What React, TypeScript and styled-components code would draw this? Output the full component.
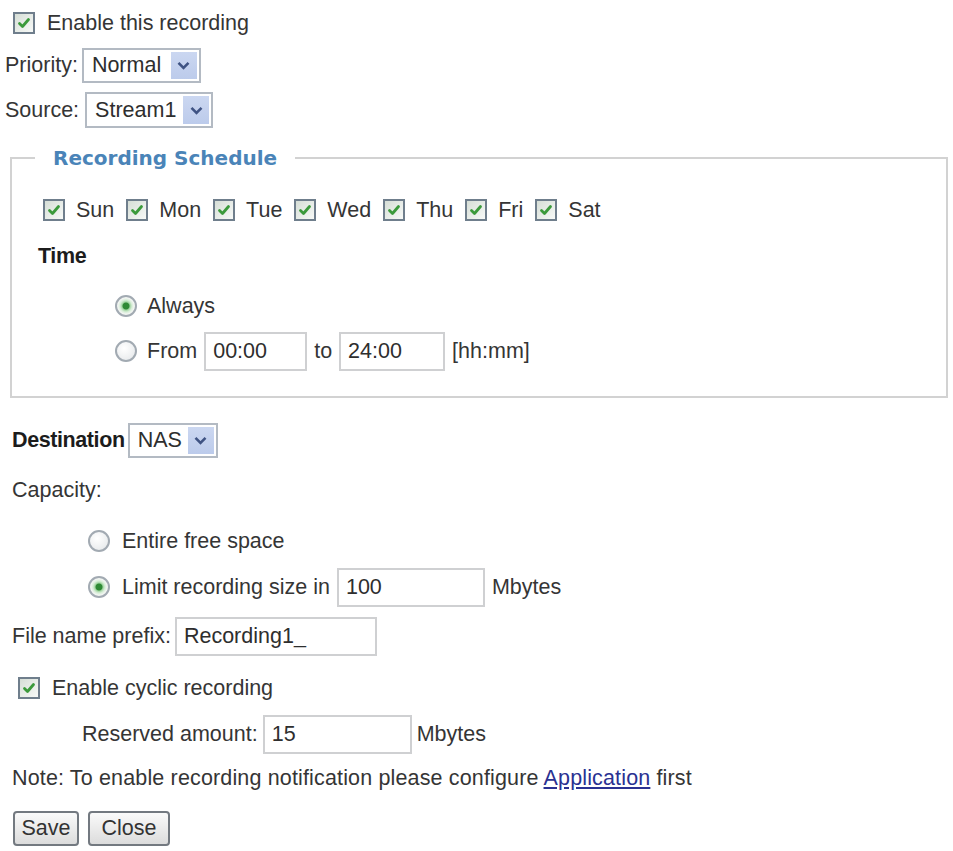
import styled, { createGlobalStyle } from "styled-components";

const GlobalStyle = createGlobalStyle`
  html, body {
    margin: 0;
    padding: 0;
    background: #fff;
  }
  body {
    font-family: "Liberation Sans", Arial, sans-serif;
    font-size: 21.5px;
    color: #353535;
  }
`;

const Page = styled.form`
  width: 953px;
  display: flex;
  flex-direction: column;
`;

const Row = styled.div<{ $h: number; $indent?: number; $gap?: number; $mt?: number }>`
  display: flex;
  align-items: center;
  height: ${(p) => p.$h}px;
  padding-left: ${(p) => p.$indent ?? 12}px;
  margin-top: ${(p) => p.$mt ?? 0}px;
  gap: ${(p) => p.$gap ?? 6}px;
  white-space: nowrap;
`;

const Strong = styled.span`
  font-weight: bold;
  color: #1c1c1c;
  letter-spacing: -0.4px;
`;

/* checkbox */
const Box = styled.span`
  box-sizing: border-box;
  width: 22px;
  height: 22px;
  flex-shrink: 0;
  display: inline-flex;
  align-items: center;
  justify-content: center;
  border: 2px solid #6f7e8c;
  background: linear-gradient(135deg, #d6ded6, #f7f9f7);
`;

const Check = () => (
  <Box>
    <svg width="16" height="16" viewBox="0 0 16 16">
      <path d="M3.5 8.5 L6.5 11.5 L12.5 4.5" fill="none" stroke="#3b9a3b" strokeWidth="2.8" strokeLinecap="round" strokeLinejoin="round" />
    </svg>
  </Box>
);

const Option = styled.label<{ $gap?: number }>`
  display: inline-flex;
  align-items: center;
  gap: ${(p) => p.$gap ?? 12}px;
`;

/* radio button */
const Radio = styled.span<{ $on?: boolean }>`
  box-sizing: border-box;
  width: 22px;
  height: 22px;
  flex-shrink: 0;
  border-radius: 50%;
  border: 2px solid #a2aab2;
  background: ${(p) =>
    p.$on
      ? "radial-gradient(circle, #2f8a35 0 3px, #9fd49f 4px, #d8eed8 6px, #f2f5f2 8px)"
      : "radial-gradient(circle at 40% 35%, #ffffff, #e3e6e8)"};
`;

/* drop-down list */
const Select = styled.div<{ $w: number; $h: number }>`
  box-sizing: border-box;
  width: ${(p) => p.$w}px;
  height: ${(p) => p.$h}px;
  display: flex;
  align-items: stretch;
  border: 2px solid #b3bac3;
  background: #fff;
  padding: 2px;
`;

const SelectValue = styled.span`
  flex: 1;
  display: flex;
  align-items: center;
  padding-left: 6px;
  color: #2e2e2e;
`;

const SelectArrow = styled.span`
  width: 26px;
  display: flex;
  align-items: center;
  justify-content: center;
  background: linear-gradient(#cbd7f1, #bccbeb);
`;

const Dropdown = ({ value, w, h }: { value: string; w: number; h: number }) => (
  <Select $w={w} $h={h}>
    <SelectValue>{value}</SelectValue>
    <SelectArrow>
      <svg width="13" height="9" viewBox="0 0 13 9">
        <path d="M1.5 1.8 L6.5 6.8 L11.5 1.8" fill="none" stroke="#3f5383" strokeWidth="2.6" />
      </svg>
    </SelectArrow>
  </Select>
);

const Field = styled.input<{ $w: number }>`
  box-sizing: border-box;
  width: ${(p) => p.$w}px;
  height: 39px;
  border: 2px solid #cfd0d2;
  padding: 0 0 0 7px;
  font: inherit;
  color: #2e2e2e;
  background: #fff;
  outline: none;
`;

/* schedule group */
const Schedule = styled.fieldset`
  box-sizing: border-box;
  width: 938px;
  margin: 12px 0 0 10px;
  padding: 0;
  min-width: 0;
  border: 2px solid #d2d2d2;
`;

const Legend = styled.legend`
  margin-left: 23px;
  padding: 0 18px;
  font-family: "DejaVu Sans", Verdana, sans-serif;
  font-weight: bold;
  font-size: 20px;
  line-height: 22px;
  color: #4a84b8;
`;

const ScheduleBody = styled.div`
  display: flex;
  flex-direction: column;
  padding: 21px 0 24px;
`;

const Note = styled.span`
  letter-spacing: 0.15px;
`;

const Link = styled.a`
  color: #2a3192;
  text-decoration: underline;
`;

const Button = styled.button<{ $w: number }>`
  box-sizing: border-box;
  width: ${(p) => p.$w}px;
  height: 35px;
  padding: 0;
  font: inherit;
  color: #333;
  border: 2px solid #737980;
  border-radius: 4px;
  background: linear-gradient(#fafafa, #dcdcdc);
`;

const days = ["Sun", "Mon", "Tue", "Wed", "Thu", "Fri", "Sat"];

export default function App() {
  return (
    <>
      <GlobalStyle />
      <Page onSubmit={(e) => e.preventDefault()}>
        <Row $h={46} $indent={13}>
          <Option>
            <Check />
            Enable this recording
          </Option>
        </Row>
        <Row $h={39} $indent={5} $gap={4}>
          <span>Priority:</span>
          <Dropdown value="Normal" w={119} h={35} />
        </Row>
        <Row $h={50} $indent={5} $gap={6}>
          <span>Source:</span>
          <Dropdown value="Stream1" w={128} h={36} />
        </Row>

        <Schedule>
          <Legend>Recording Schedule</Legend>
          <ScheduleBody>
            <Row $h={40} $indent={31} $gap={12}>
              {days.map((d) => (
                <Option key={d} $gap={11}>
                  <Check />
                  {d}
                </Option>
              ))}
            </Row>
            <Row $h={52} $indent={26}>
              <Strong>Time</Strong>
            </Row>
            <Row $h={48} $indent={103}>
              <Option $gap={10}>
                <Radio $on />
                Always
              </Option>
            </Row>
            <Row $h={42} $indent={103} $gap={7}>
              <Option $gap={10}>
                <Radio />
                From
              </Option>
              <Field $w={103} defaultValue="00:00" />
              <span>to</span>
              <Field $w={106} defaultValue="24:00" />
              <span>[hh:mm]</span>
            </Row>
          </ScheduleBody>
        </Schedule>

        <Row $h={49} $mt={18} $gap={3}>
          <Strong>Destination</Strong>
          <Dropdown value="NAS" w={90} h={35} />
        </Row>
        <Row $h={51}>
          <span>Capacity:</span>
        </Row>
        <Row $h={50} $indent={88}>
          <Option>
            <Radio />
            Entire free space
          </Option>
        </Row>
        <Row $h={42} $indent={88} $gap={7}>
          <Option>
            <Radio $on />
            Limit recording size in
          </Option>
          <Field $w={148} defaultValue="100" />
          <span>Mbytes</span>
        </Row>
        <Row $h={56} $gap={4}>
          <span>File name prefix:</span>
          <Field $w={202} defaultValue="Recording1_" />
        </Row>
        <Row $h={48} $indent={18}>
          <Option>
            <Check />
            Enable cyclic recording
          </Option>
        </Row>
        <Row $h={44} $indent={82} $gap={5}>
          <span>Reserved amount:</span>
          <Field $w={149} defaultValue="15" />
          <span>Mbytes</span>
        </Row>
        <Row $h={45}>
          <Note>
            Note: To enable recording notification please configure <Link href="#application">Application</Link> first
          </Note>
        </Row>
        <Row $h={55} $indent={13} $gap={9}>
          <Button type="submit" $w={66}>Save</Button>
          <Button type="button" $w={82}>Close</Button>
        </Row>
      </Page>
    </>
  );
}
